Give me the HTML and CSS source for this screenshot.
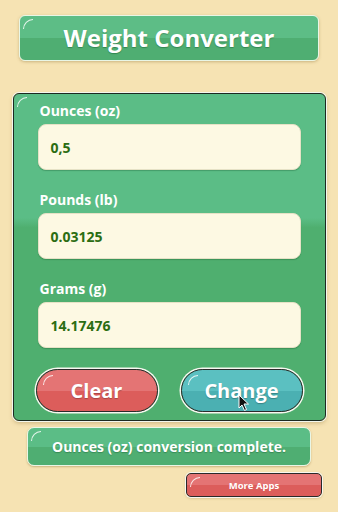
FILE: index.html
```html
<!DOCTYPE html>
<html>
<head>
<meta charset="utf-8">
<link rel="stylesheet" href="styles.css">
</head>
<body>
<div class="app">
  <div class="title gloss">Weight Converter</div>
  <div class="panel gloss">
    <div class="field">
      <div class="label">Ounces (oz)</div>
      <div class="input">0,5</div>
    </div>
    <div class="field">
      <div class="label">Pounds (lb)</div>
      <div class="input">0.03125</div>
    </div>
    <div class="field">
      <div class="label">Grams (g)</div>
      <div class="input">14.17476</div>
    </div>
    <div class="buttons">
      <div class="btn red gloss">Clear</div>
      <div class="btn teal gloss">Change
        <svg class="cursor" width="12" height="18" viewBox="0 0 12 18"><path d="M1 1 L1 14 L4 11 L6.5 16.5 L8.5 15.5 L6 10 L10.5 10 Z" fill="#111" stroke="#fff" stroke-width="1"/></svg>
      </div>
    </div>
  </div>
  <div class="status gloss">Ounces (oz) conversion complete.</div>
  <div class="more-row">
    <div class="more gloss">More Apps</div>
  </div>
</div>
</body>
</html>
```
FILE: styles.css
```css
html, body {
  margin: 0;
  padding: 0;
  background: #f6e3b3;
  width: 338px;
  height: 512px;
  overflow: hidden;
  font-family: "Open Sans", "Lato", sans-serif;
  font-weight: 700;
}
.app {
  display: flex;
  flex-direction: column;
  align-items: center;
  padding-top: 15px;
}
.gloss { position: relative; }
.gloss::before {
  content: "";
  position: absolute;
  left: 3px;
  top: 3px;
  width: 10px;
  height: 10px;
  border-top: 1.5px solid rgba(255,255,255,0.85);
  border-left: 1.5px solid rgba(255,255,255,0.85);
  border-top-left-radius: 10px;
  box-sizing: border-box;
}
.title {
  width: 300px;
  height: 46px;
  box-sizing: border-box;
  border-radius: 6px;
  background: linear-gradient(#5dbd86 0 50%, #4fae72 50% 100%);
  border: 1.5px solid #e9f6e6;
  box-shadow: 0 1px 3px rgba(120,90,30,0.35);
  color: #fff;
  font-size: 24px;
  line-height: 1;
  display: flex;
  align-items: center;
  justify-content: center;
  text-shadow: 0 1px 1px rgba(0,60,20,0.35);
}
.panel {
  margin-top: 32px;
  width: 313px;
  height: 328px;
  box-sizing: border-box;
  border-radius: 6px;
  background: linear-gradient(#5bbd86 0 38%, #4faf6f 41% 100%);
  border: 1px solid #1c2a20;
  box-shadow: 0 0 0 1px #f3f7ee, 0 2px 4px rgba(120,90,30,0.35);
  padding: 8px 24px 0 24px;
  display: flex;
  flex-direction: column;
  gap: 21px;
}
.field {
  display: flex;
  flex-direction: column;
}
.label {
  color: #fff;
  font-size: 14px;
  line-height: 18px;
  padding-left: 2px;
  margin-bottom: 4px;
}
.input {
  height: 46px;
  box-sizing: border-box;
  border-radius: 8px;
  background: #fdf9e3;
  border: 1px solid #e6e2c6;
  box-shadow: 0 1px 1px rgba(0,60,20,0.25);
  color: #2b6d12;
  font-size: 14px;
  display: flex;
  align-items: center;
  padding-left: 12px;
}
.buttons {
  display: flex;
  justify-content: space-between;
  margin: 0 -2px;
}
.btn {
  width: 122px;
  height: 43px;
  box-sizing: border-box;
  border-radius: 22px;
  border: 1px solid #2a2a2a;
  box-shadow: 0 0 0 1.5px #f7f7f0;
  color: #fff;
  font-size: 20px;
  line-height: 1;
  display: flex;
  align-items: center;
  justify-content: center;
  text-shadow: 0 1px 1px rgba(0,0,0,0.25);
}
.btn::before { left: 6px; top: 5px; }
.red { background: linear-gradient(#e47474 0 50%, #dc5d5b 50% 100%); }
.teal { background: linear-gradient(#5bc0c1 0 50%, #4bb0b2 50% 100%); }
.cursor {
  position: absolute;
  left: 56px;
  top: 24px;
}
.status {
  margin-top: 6px;
  width: 284px;
  height: 39px;
  box-sizing: border-box;
  border-radius: 7px;
  background: linear-gradient(#5bbd86 0 50%, #4fae72 50% 100%);
  border: 1.5px solid #e9f6e6;
  box-shadow: 0 1px 2px rgba(120,90,30,0.35);
  color: #fff;
  font-size: 14px;
  display: flex;
  align-items: center;
  justify-content: center;
  text-shadow: 0 1px 1px rgba(0,60,20,0.3);
}
.more-row {
  width: 338px;
  display: flex;
  justify-content: flex-end;
  padding-right: 16px;
  box-sizing: border-box;
  margin-top: 7px;
}
.more {
  width: 136px;
  height: 24px;
  box-sizing: border-box;
  border-radius: 5px;
  background: linear-gradient(#e47474 0 50%, #dc5d5b 50% 100%);
  border: 1px solid #2a2a2a;
  box-shadow: 0 0 0 1px #f7f7f0, 0 1px 3px rgba(120,90,30,0.4);
  color: #fff;
  font-size: 9.5px;
  display: flex;
  align-items: center;
  justify-content: center;
}
```
